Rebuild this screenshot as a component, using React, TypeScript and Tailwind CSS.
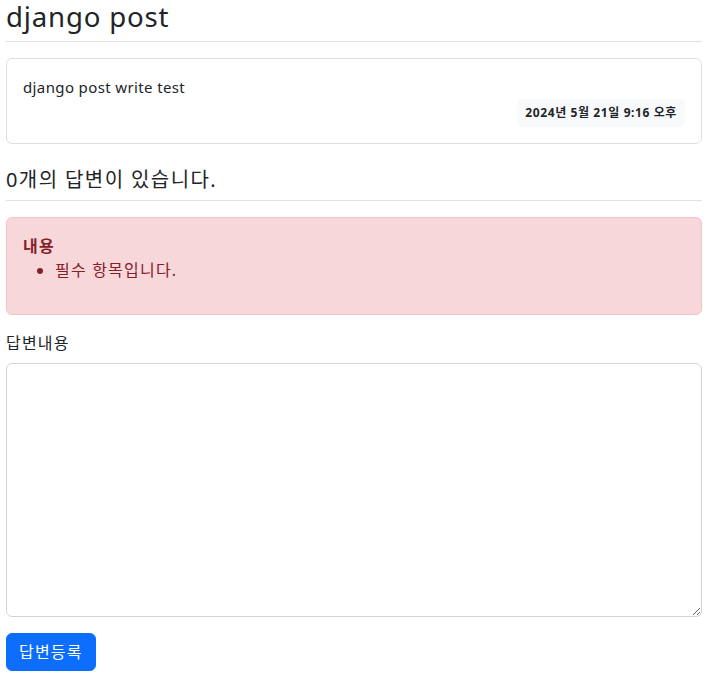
export default function App() {
  return (
    <div
      className="w-[710px] bg-white text-[#212529] text-[16px] leading-[24px]"
      style={{ fontFamily: '"Noto Sans", "Noto Sans CJK KR", sans-serif' }}
    >
      <div className="pl-[6px] pr-[8px]">
        {/* post title */}
        <h2 className="border-b border-[#dee2e6] pb-2 text-[27.6px] leading-[1.2] font-normal tracking-[0.03em]">
          django post
        </h2>

        {/* post body */}
        <div className="my-4 rounded-[6px] border border-black/[0.125]">
          <div className="p-4">
            <div className="text-[15px] tracking-[0.025em]">django post write test</div>
            <div className="flex justify-end">
              <div className="rounded-[6px] bg-[#f8f9fa] p-2 text-[12px] leading-[12px] font-bold tracking-[0.05em] text-[#212529]">
                2024년 5월 21일 9:16 오후
              </div>
            </div>
          </div>
        </div>

        {/* answers */}
        <h5 className="my-4 border-b border-[#dee2e6] py-2 text-[20px] leading-[24px] font-normal tracking-[0.07em]">
          0개의 답변이 있습니다.
        </h5>

        {/* form errors */}
        <div className="mb-4 rounded-[6px] border border-[#f5c2c7] bg-[#f8d7da] p-4 text-[#842029] tracking-[0.075em]">
          <strong className="block font-bold">내용</strong>
          <ul className="mb-4 list-disc pl-8">
            <li>필수 항목입니다.</li>
          </ul>
        </div>

        {/* answer form */}
        <div className="mb-4">
          <label className="mb-2 block tracking-[0.075em]">답변내용</label>
          <textarea
            rows={10}
            className="block h-[254px] w-full rounded-[6px] border border-[#ced4da] px-3 py-1.5 outline-none"
          />
        </div>
        <button className="rounded-[6px] border border-[#0d6efd] bg-[#0d6efd] px-3 py-1.5 text-white tracking-[0.075em]">
          답변등록
        </button>
        <div className="h-2" />
      </div>
    </div>
  );
}
